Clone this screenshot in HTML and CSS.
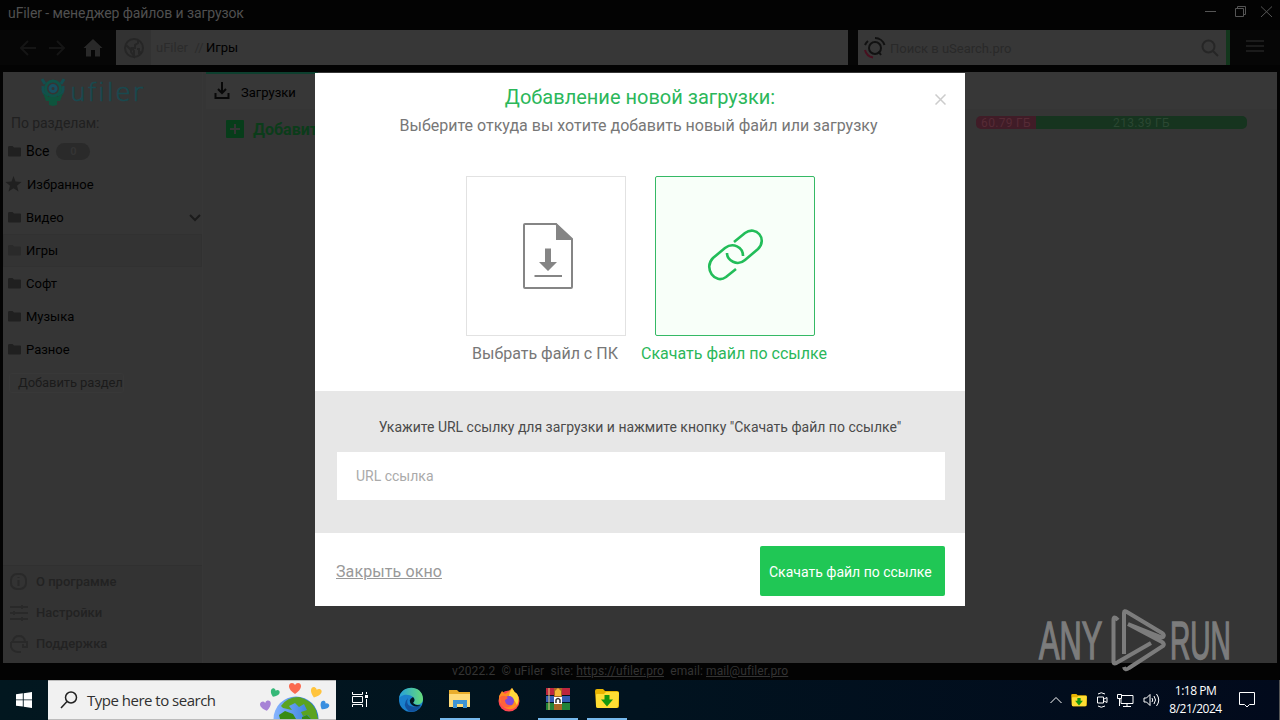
FILE: index.html
```html
<!DOCTYPE html>
<html lang="ru">
<head>
    <meta charset="UTF-8">
    <title>uFiler - менеджер файлов и загрузок</title>
    <link rel="stylesheet" href="styles.css">
</head>
<body>
    <!-- shared icons -->
    <svg class="defs">
        <symbol id="folder" viewBox="0 0 13 11"><path d="M0 1.5Q0 0 1 0H4.5L6 1.5H12Q13 1.5 13 2.5V9.5Q13 10.5 12 10.5H1Q0 10.5 0 9.5Z"/></symbol>
        <symbol id="dlfolder" viewBox="0 0 24 20">
            <path d="M0 2Q0 0 2 0H8L10 2H22Q24 2 24 4V17Q24 19 22 19H3Q1 19 1 17Z" fill="#e8b400"/>
            <path d="M1 6Q1 5 2 5H9L11 3H23Q24 3 24 5L23 17Q23 19 21 19H3Q1 19 1 17Z" fill="#ffdd33"/>
            <path d="M9.500 6H14.500V10.500H18L12 17.500L6 10.500H9.500Z" fill="#16960f"/>
        </symbol>
    </svg>

    <div class="app">
        <header class="titlebar">
            <span class="title">uFiler - менеджер файлов и загрузок</span>
            <svg class="winbtns" width="70" height="16" viewBox="0 0 70 16">
                <path d="M0 7.500H11M30.500 4.500H38.500V12.500H30.500ZM32.500 4.500V2.500H40.500V10.500H38.500M56 2.500L67 13M67 2.500L56 13"/>
            </svg>
        </header>

        <section class="toolbar">
            <div class="nav">
                <svg width="46" height="16" viewBox="0 0 46 16"><path class="arrow" d="M16 8H1M8 1L1 8L8 15M29 8H44M37 1L44 8L37 15"/></svg>
                <svg width="20" height="18" viewBox="0 0 20 18"><path class="home" d="M10 0L19.500 9H17V17.500H12V11H8V17.500H3V9H.5Z"/></svg>
            </div>
            <div class="address">
                <div class="globe"><svg width="22" height="22" viewBox="0 0 22 22"><circle cx="11" cy="11" r="9"/><path d="M3 8L8 13V15L11 19V14L9 11H12V8L15 6V3M14 12H16V16L18 15" /></svg></div>
                <span class="root">uFiler&nbsp; //</span>
                <span class="here">Игры</span>
            </div>
            <div class="search">
                <svg width="24" height="24" viewBox="0 0 24 24" class="usearch">
                    <circle cx="12" cy="12" r="6"/><path d="M15.500 15.500L18 19M12 2A10 10 0 0 1 21.500 9M2 9A10 10 0 0 1 5 5"/>
                    <path class="red" d="M2 14A10 10 0 0 0 10 21.500"/>
                </svg>
                <span class="ph">Поиск в uSearch.pro</span>
                <svg width="18" height="18" viewBox="0 0 18 18" class="lens"><circle cx="7.500" cy="7.500" r="6"/><path d="M12 12L17 17"/></svg>
            </div>
            <div class="burger"><i></i><i></i><i></i></div>
        </section>

        <section class="workspace">
            <aside class="sidebar">
                <div class="logo">
                    <svg width="26" height="30" viewBox="0 0 26 30">
                        <path d="M2 1L5 6M24 1L21 6M3 8Q2 16 8 18M23 8Q24 16 18 18" class="horns"/>
                        <circle cx="13" cy="10.500" r="7.500"/><circle class="eye" cx="13" cy="10.500" r="3"/>
                        <path class="body" d="M3 15L9 19H17L23 15L20 23H17V27L13 28L9 27V23H6Z"/>
                    </svg>
                    <span>ufiler</span>
                </div>
                <p class="caption">По разделам:</p>
                <ul class="sections">
                    <li class="all"><svg><use href="#folder"/></svg>Все <b>0</b></li>
                    <li class="fav"><svg viewBox="0 0 16 16"><path d="M8 0L10 5.500L16 6L11.500 9.800L13 15.500L8 12.300L3 15.500L4.500 9.800L0 6L6 5.500Z"/></svg>Избранное</li>
                    <li><svg><use href="#folder"/></svg>Видео<svg class="chev" viewBox="0 0 12 8"><path d="M1 1L6 6L11 1"/></svg></li>
                    <li class="active"><svg><use href="#folder"/></svg>Игры</li>
                    <li><svg><use href="#folder"/></svg>Софт</li>
                    <li><svg><use href="#folder"/></svg>Музыка</li>
                    <li><svg><use href="#folder"/></svg>Разное</li>
                </ul>
                <span class="addsection">Добавить раздел</span>
                <ul class="service">
                    <li><svg viewBox="0 0 20 20"><rect x="2" y="2" width="15" height="15" rx="6"/><path d="M9.500 5V6M9.500 8V14"/></svg>О программе</li>
                    <li><svg viewBox="0 0 20 20"><path d="M1 4H19M1 10H19M1 16H19M13 2V6M5 8V12M13 14V18"/></svg>Настройки</li>
                    <li><svg viewBox="0 0 20 20"><path d="M4 7Q5 2 10 2T16 7M2 8H18V13H14V10M2 8V13Q4 18 9 18H12"/></svg>Поддержка</li>
                </ul>
            </aside>
            <main class="content">
                <div class="tabs">
                    <div class="tab">
                        <svg width="16" height="18" viewBox="0 0 16 18"><path d="M8 0V11M4 7L8 11L12 7M1.500 11V16H14.500V11"/></svg>
                        <span>Загрузки</span>
                    </div>
                </div>
                <div class="actions">
                    <svg width="18" height="18" viewBox="0 0 18 18"><rect width="18" height="18" rx="1"/><path d="M9 4V14M4 9H14"/></svg>
                    <span class="add">Добавить</span>
                    <div class="disk"><span class="used">60.79 ГБ</span><span class="free">213.39 ГБ</span></div>
                </div>
            </main>
        </section>

        <footer class="statusbar">
            <span class="status">v2022.2 &nbsp;© uFiler &nbsp;site: <u>https://ufiler.pro</u> &nbsp;email: <u>mail@ufiler.pro</u></span>
        </footer>
    </div>

    <section class="modal">
        <svg class="close" width="11" height="11" viewBox="0 0 11 11"><path d="M.5.5L10.500 10.500M10.500.5L.5 10.500"/></svg>
        <h1><span>Добавление новой загрузки:</span></h1>
        <p class="sub"><span>Выберите откуда вы хотите добавить новый файл или загрузку</span></p>
        <div class="choices">
            <div class="choice">
                <div class="card file">
                    <svg width="52" height="68" viewBox="0 0 52 68">
                        <path class="line" d="M3 2H34L50 17V65Q50 66 49 66H3Q2 66 2 65V3Q2 2 3 2ZM12.500 54H40"/>
                        <path class="fill" d="M34 1V18H51ZM23 26.500H29V40H35L26 49L17 40H23Z"/>
                    </svg>
                </div>
                <span class="pc">Выбрать файл с ПК</span>
            </div>
            <div class="choice selected">
                <div class="card">
                    <svg width="60" height="56" viewBox="0 0 60 56">
                        <path class="line" d="M29 14L40 5C51-3 63 11 53 21L40 32C32 39 22 32 22 25M38 28C38 19 28 14 20 20L8 30C-2 40 10 57 21 49L31 41"/>
                    </svg>
                </div>
                <span class="link">Скачать файл по ссылке</span>
            </div>
        </div>
        <div class="urlbox">
            <label><span>Укажите URL ссылку для загрузки и нажмите кнопку "Скачать файл по ссылке"</span></label>
            <div class="field"><span>URL ссылка</span></div>
        </div>
        <div class="bottom">
            <a class="cancel">Закрыть окно</a>
            <div class="submit"><span>Скачать файл по ссылке</span></div>
        </div>
    </section>

    <!-- watermark -->
    <div class="anyrun">
        <span class="any">ANY</span>
        <svg width="56" height="64" viewBox="0 0 56 64"><path d="M8 11Q3.500 6 3.500 11V53Q4 56 8 53L41 34M14 45V4Q14 1 17 3L52 24Q55 26 53 28Q51 29 48 27L18 15M14 58Q15 62 19 59L53 37Q55 35 52 33L18 15"/></svg>
        <span class="run">RUN</span>
    </div>

    <nav class="taskbar">
        <div class="start"><svg width="16" height="16" viewBox="0 0 16 16"><path d="M0 2.300L6.800 1.300V7.500H0ZM7.700 1.200L16 0V7.500H7.700ZM0 8.300H6.800V14.600L0 13.700ZM7.700 8.300H16V16L7.700 14.800Z"/></svg></div>
        <div class="winsearch">
            <svg width="18" height="18" viewBox="0 0 18 18" class="glass"><circle cx="11" cy="6.500" r="5.500"/><path d="M7 10.500L1 17"/></svg>
            <span>Type here to search</span>
            <svg class="earth" width="76" height="38" viewBox="0 0 76 38">
                <defs><linearGradient id="sea"><stop offset="0" stop-color="#86b4ff"/><stop offset="1" stop-color="#2977d6"/></linearGradient>
                <path id="heart" d="M0 10C-8 5-7-1-3-1Q-1-1 0 1Q1-1 3-1C7-1 8 5 0 10Z"/></defs>
                <circle cx="37" cy="38" r="22.500" fill="url(#sea)"/>
                <path d="M22 25Q28 16 40 16Q52 19 57 29L59 38H52L49 34L44 35L42 31L48 29L45 23L40 26L36 22L30 25L33 29L24 27Z" fill="#5ba321"/>
                <path d="M20 34L26 30L34 33L37 38H21ZM43 36L48 34L52 38H43Z" fill="#388b13"/>
                <use href="#heart" x="36" y="3" fill="#fb6a50"/>
                <use href="#heart" transform="translate(17 9) rotate(24) scale(.75)" fill="#35b878"/>
                <use href="#heart" transform="translate(6 21) rotate(-12) scale(.9)" fill="#a783d6"/>
                <use href="#heart" transform="translate(58 8) rotate(20) scale(.9)" fill="#ffc43c"/>
                <use href="#heart" transform="translate(67 22) rotate(35) scale(.75)" fill="#398fe0"/>
            </svg>
        </div>
        <div class="tasks">
            <div class="task"><svg width="18" height="18" viewBox="0 0 18 18"><path class="white" d="M1.500 1V3.500H11.500V1M1.500 16V13.500H11.500V16M1.500 5.500H11.500V11.500H1.500ZM15.500 1V3M15.500 8V16"/><path d="M14 4H17V7H14Z" fill="#fff"/></svg></div>
            <div class="task"><svg width="26" height="26" viewBox="0 0 26 26">
                <defs><linearGradient id="edge"><stop offset="0" stop-color="#249fdc"/><stop offset="1" stop-color="#67dc78"/></linearGradient></defs>
                <circle cx="13" cy="13" r="12" fill="#1a80cc"/><path d="M1 12C2-3 25-3 25 12C25 18 18 19 15 16Q18 13 15 10C10 6 2 8 1 12Z" fill="url(#edge)"/><path d="M10 11Q6 22 23 19Q18 26 11 24.500Q3 18 10 11Z" fill="#12529f"/><path d="M15 10Q9 13 14 18Q19 21 23 18Q18 19 15 16Q18 13 15 10Z" fill="#031521"/></svg></div>
            <div class="task open"><svg width="24" height="22" viewBox="0 0 24 22"><path d="M1 2H9L11 4H22V19H1Z" fill="#e9ad2c"/><path d="M1 6H22V19H1Z" fill="#ffdb79"/><path d="M5 12H19V20H15V16H9V20H5Z" fill="#3f94d3"/></svg></div>
            <div class="task"><svg width="24" height="26" viewBox="0 0 24 26"><circle cx="12" cy="14" r="10.500" fill="#ff4751"/><path d="M2 9L5 4L8 7L11 5Q13 3 15 1Q17 5 20 7Q24 14 19 20Q14 24 8 21Q2 17 2 9Z" fill="#ff8c22"/><path d="M15 1Q17 5 20 7Q23 12 20 18Q16 10 12 9Q13 4 15 1Z" fill="#ffd83a"/><circle cx="12" cy="14" r="5" fill="#8048d8"/><path d="M3 10Q7 7 11 11L8 13Q8 19 15 18Q9 23 4 18Z" fill="#ff623b"/></svg></div>
            <div class="task open"><svg width="24" height="24" viewBox="0 0 24 24"><path d="M0 1H24V8H0Z" fill="#bd263e"/><path d="M0 9H24V15H0Z" fill="#355cb4"/><path d="M0 16H24V23H0Z" fill="#228338"/><path d="M3 1V23" stroke="#eacb80"/><path d="M8 1H16V23H8Z" fill="#a76525"/><path d="M9 4L12 1L15 4V9H9Z" fill="#f4b735"/><path d="M8 10H16V17H8Z" fill="#fff"/><path d="M10 16V13Q12 10 14 13V16" fill="none" stroke="#333" stroke-width="1.500"/></svg></div>
            <div class="task open"><svg width="24" height="20"><use href="#dlfolder"/></svg></div>
        </div>
        <div class="tray">
            <svg width="12" height="8" viewBox="0 0 12 8"><path d="M.5 7L6 1.500L11.500 7"/></svg>
            <svg class="mini" width="16" height="13"><use href="#dlfolder"/></svg>
            <svg width="12" height="16" viewBox="0 0 12 16"><path d="M1.500 5H7.500V11H1.500ZM8 7L11 5.500V10.500L8 9M2 2Q5-.5 9 2M2 14Q5 16.500 9 14"/></svg>
            <svg width="17" height="15" viewBox="0 0 17 15"><path d="M5 2.500H16V10.500H4V6M.5 1.500H4.500V5.500H.5ZM2.500 5.500V13M10 10.500V13.500M6 13.500H14"/></svg>
            <svg width="17" height="14" viewBox="0 0 17 14"><path d="M1 5H3.500L7 1.500V12.500L3.500 9H1ZM9 5Q10.500 7 9 9M11 3Q14 7 11 11M13.500 1Q18 7 13.500 13"/></svg>
        </div>
        <div class="clock"><span>1:18 PM</span><span>8/21/2024</span></div>
        <svg class="note" width="16" height="16" viewBox="0 0 16 16"><path d="M.5.5H15.500V12.500H10.500L8 15L5.500 12.500H.5Z"/></svg>
    </nav>
</body>
</html>
```
FILE: styles.css
```css
*{
    padding:0;
    margin:0;
    box-sizing:border-box;
}
body{
    width:1280px;
    height:720px;
    overflow:hidden;
    position:relative;
    background:#030303;
    font-family:Roboto, sans-serif;
    font-size:13px;
}
svg{
    fill:none;
    flex-shrink:0;
}
ul{
    list-style:none;
}
span{
    white-space:nowrap;
}
.defs{
    display:none;
}
.app{
    height:680px;
    display:flex;
    flex-direction:column;
}

/* window header */
.titlebar{
    height:30px;
    display:flex;
    justify-content:space-between;
    padding:4px 5px 0 8px;
    color:#505050;
    font-size:14px;
    line-height:18px;
    letter-spacing:-.09px;
}
.winbtns{
    stroke:#555;
}
.toolbar{
    height:35px;
    display:flex;
    background:#060606;
}
.nav{
    width:116px;
    display:flex;
    align-items:center;
    padding-left:20px;
    gap:17px;
}
.arrow{
    stroke:#151515;
    stroke-width:2;
}
.home{
    fill:#292929;
}
.address{
    width:732px;
    background:#373737;
    display:flex;
    align-items:center;
}
.globe{
    width:35px;
    height:35px;
    padding:7px;
    background:#323232;
    stroke:#262626;
    stroke-width:2;
}
.root{
    margin-left:5px;
    width:50px;
    color:#2b2b2b;
}
.here{
    color:#000;
}
.search{
    width:372px;
    margin-left:10px;
    padding:0 7px 0 5px;
    background:#373737;
    border-right:4px solid #12361c;
    display:flex;
    align-items:center;
}
.usearch{
    stroke:#111;
    stroke-width:2;
}
.red{
    stroke:#48101f;
}
.ph{
    color:#292929;
    flex:1;
    margin-left:3px;
    padding-top:2px;
}
.lens{
    stroke:#262626;
    stroke-width:2;
}
.burger{
    display:flex;
    flex-direction:column;
    gap:3px;
    padding:10px 0 0 16px;
}
.burger i{
    width:18px;
    height:2px;
    background:#1b1b1b;
}

/* main window */
.workspace{
    height:591px;
    margin:7px 3px 0;
    display:flex;
    background:#353535;
}
.sidebar{
    width:200px;
    display:flex;
    flex-direction:column;
    border-right:1px solid #373737;
}
.logo{
    height:41px;
    padding:6px 0 0 37px;
    display:flex;
    gap:4px;
    stroke:#105348;
    stroke-width:3;
}
.logo .horns{
    stroke:#144e50;
}
.logo .eye{
    stroke:#175061;
}
.logo .body{
    fill:#0e543d;
    stroke:none;
}
.logo span{
    font-family:"DejaVu Sans", sans-serif;
    font-weight:200;
    font-size:25px;
    line-height:30px;
    letter-spacing:1.7px;
    color:#19494f;
    -webkit-text-stroke:.7px #19494f;
}
.caption{
    padding-left:8px;
    height:22px;
    line-height:20px;
    font-size:14px;
    letter-spacing:-.08px;
    color:#202020;
}
.sections li{
    height:33px;
    padding-left:5px;
    display:flex;
    align-items:center;
    gap:5px;
    color:#000;
}
.sections svg{
    width:13px;
    height:11px;
    fill:#202020;
}
.sections .all{
    height:32px;
    font-size:14px;
}
.all b{
    width:34px;
    height:17px;
    margin-left:2px;
    border-radius:9px;
    background:#2a2a2a;
    color:#343434;
    font-size:11px;
    line-height:17px;
    text-align:center;
}
.sections .fav{
    height:34px;
    padding-left:2px;
}
.fav svg{
    width:17px;
    height:16px;
}
.sections .active{
    background:#333;
    outline:1px solid #313131;
    outline-offset:-1px;
}
.sections .active svg{
    fill:#2a2a2a;
}
.sections .chev{
    width:12px;
    height:8px;
    margin-left:auto;
    margin-right:1px;
    fill:none;
    stroke:#1b1b1b;
    stroke-width:2;
}
.addsection{
    margin:7px 0 0 6px;
    width:115px;
    height:20px;
    padding-left:8px;
    line-height:18px;
    letter-spacing:-.1px;
    border-radius:3px;
    color:#1b1b1b;
    border:1px solid #383838;
}
.service{
    margin-top:auto;
    height:98px;
    padding-left:6px;
    border-top:1px solid #303030;
    background:#333;
}
.service li{
    height:31px;
    display:flex;
    align-items:center;
    gap:7px;
    color:#222;
    font-weight:500;
}
.service svg{
    width:20px;
    height:20px;
    stroke:#292929;
    stroke-width:2;
}
.content{
    flex:1;
    margin-left:3px;
}
.tabs{
    height:37px;
    background:#373737;
}
.tab{
    width:112px;
    height:37px;
    border-top:2px solid #0d3f2e;
    padding:2px 0 0 8px;
    display:flex;
    align-items:center;
    gap:11px;
}
.tab svg{
    stroke:#080808;
    stroke-width:2;
    margin-top:-3px;
}
.actions{
    display:flex;
    padding:11px 30px 0 20px;
}
.actions svg{
    fill:#073d1a;
    stroke:#353535;
    stroke-width:2;
}
.actions rect{
    stroke:none;
}
.add{
    margin-left:9px;
    font-size:16px;
    font-weight:700;
    line-height:19px;
    color:#0b3c1a;
}
.disk{
    width:271px;
    height:13px;
    margin:-4px 0 0 auto;
    display:flex;
    border-radius:5px;
    overflow:hidden;
    color:#2b4732;
    font-size:12px;
    line-height:14px;
    letter-spacing:.3px;
    text-align:center;
}
.used{
    width:60px;
    background:#401c27;
    color:#562b36;
}
.free{
    flex:1;
    background:#16341f;
}
.statusbar{
    height:17px;
    padding-left:452px;
    line-height:16px;
    font-size:12px;
    letter-spacing:.1px;
    color:#343434;
}

/* new download dialog */
.modal{
    position:absolute;
    left:315px;
    top:73px;
    width:650px;
    height:533px;
    background:#fff;
}
.modal h1{
    padding-top:10px;
    height:38px;
    font-size:20px;
    line-height:28px;
    font-weight:400;
    color:#2bb75a;
    text-align:center;
}
.sub{
    padding-right:3px;
    font-size:16px;
    line-height:30px;
    height:28px;
    color:#777;
    text-align:center;
}
.close{
    position:absolute;
    right:19px;
    top:21px;
    stroke:#ccc;
    stroke-width:1.5;
}
.choices{
    height:252px;
    padding:37px 0 0 136px;
    display:flex;
}
.choice{
    width:189px;
    font-size:16px;
    color:#777;
}
.card{
    width:160px;
    height:160px;
    margin-left:15px;
    margin-bottom:8px;
    border:1px solid #e2e2e2;
    display:flex;
    align-items:center;
    justify-content:center;
}
.file{
    padding-left:4px;
}
.choice > span{
    display:block;
    width:188px;
    text-align:center;
}
.card .line{
    stroke:#858585;
    stroke-width:2;
}
.card .fill{
    fill:#858585;
}
.selected{
    color:#2bb75a;
}
.selected .card{
    border-color:#35b965;
    border-radius:2px;
    background:#f8fff9;
}
.selected .line{
    stroke:#22bd59;
    stroke-width:2.6;
}
.urlbox{
    height:142px;
    padding:26px 20px 0 22px;
    background:#e7e7e7;
}
.urlbox label{
    display:block;
    height:35px;
    padding-right:2px;
    line-height:20px;
    font-size:14px;
    color:#4b4b4b;
    text-align:center;
}
.field{
    height:48px;
    padding-left:19px;
    line-height:48px;
    font-size:14px;
    color:#aaa;
    background:#fff;
}
.bottom{
    height:73px;
    padding:13px 20px 0 21px;
    display:flex;
    justify-content:space-between;
}
.cancel{
    line-height:52px;
    font-size:16px;
    letter-spacing:.1px;
    color:#999;
    text-decoration:underline;
}
.submit{
    width:185px;
    height:50px;
    padding-left:9px;
    line-height:52px;
    border-radius:2px;
    background:#20c755;
    color:#fff;
    font-size:14px;
}

.anyrun{
    position:absolute;
    left:1039px;
    top:609px;
    width:194px;
    height:64px;
    display:flex;
    color:#7c7c7c;
    font-family:"Liberation Sans", sans-serif;
    font-size:53px;
    line-height:64px;
}
.anyrun span{
    width:64px;
    transform:scaleX(.58);
    transform-origin:left;
    -webkit-text-stroke:1.6px #7c7c7c;
}
.anyrun .run{
    transform:scaleX(.53);
}
.anyrun svg{
    margin:0 4px 0 7px;
    stroke:#7c7c7c;
    stroke-width:4;
}

/* windows taskbar */
.taskbar{
    height:40px;
    display:flex;
    background:linear-gradient(90deg, #02171f, #01131f 50%, #020a1c);
    font-family:"Open Sans", sans-serif;
    border-right:1px solid #555;
}
.start{
    width:48px;
    padding:12px 16px;
}
.start path{
    fill:#fff;
}
.winsearch{
    width:288px;
    height:40px;
    display:flex;
    align-items:center;
    padding-left:12px;
    background:#f1f1f1;
    border:1px solid #bcbcbc;
    border-width:1px 0;
    font-size:15px;
    letter-spacing:-.5px;
    color:#303030;
}
.glass{
    stroke:#222;
    stroke-width:1.500;
}
.winsearch span{
    margin-left:9px;
}
.earth{
    margin-left:auto;
    margin-right:1px;
}
.tasks{
    display:flex;
    margin-left:4px;
}
.task{
    width:40px;
    height:40px;
    margin-right:9px;
    display:flex;
    align-items:center;
    justify-content:center;
}
.task:first-child{
    margin-right:11px;
}
.open{
    border-bottom:2px solid #76b9ed;
}
.white{
    stroke:#fff;
}
.tray{
    margin-left:auto;
    display:flex;
    align-items:center;
    gap:9px;
    stroke:#fff;
}
.mini{
    stroke:none;
}
.clock{
    width:71px;
    padding-top:2px;
    display:flex;
    flex-direction:column;
    align-items:center;
    color:#fff;
    font-size:12px;
    line-height:18px;
    letter-spacing:-.5px;
}
.note{
    margin:12px 24px 0 8px;
    stroke:#fff;
}
```
